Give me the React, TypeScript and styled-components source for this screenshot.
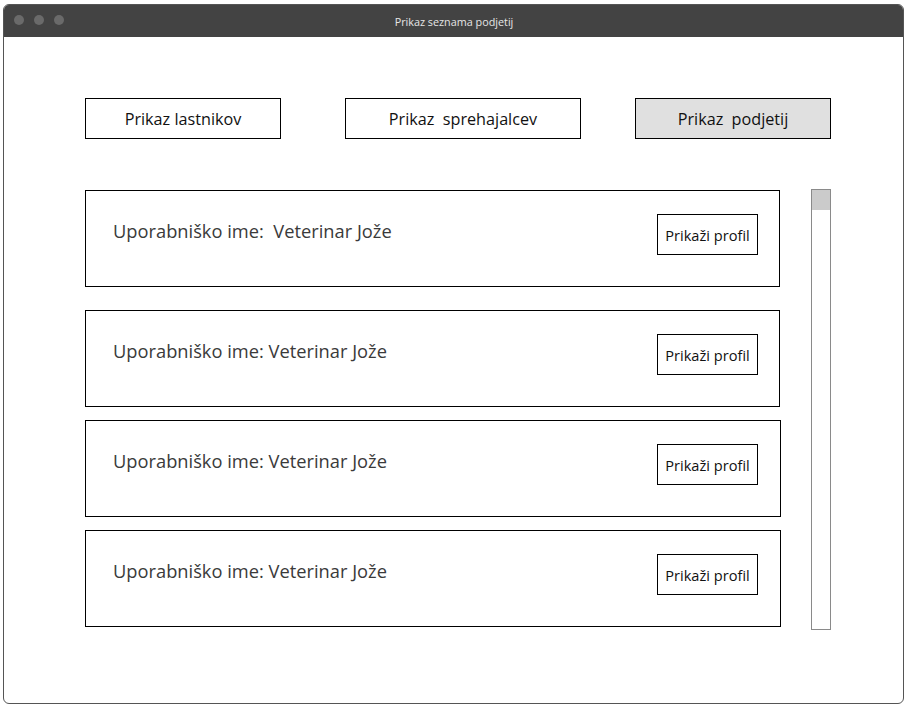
import React from "react";
import styled, { createGlobalStyle } from "styled-components";

const Global = createGlobalStyle`
  html, body { margin: 0; padding: 0; background: #fff; }
  body { font-family: "Open Sans", "Noto Sans", sans-serif; }
`;

const Page = styled.div`
  padding: 4px 6px 2px 3px;
`;

const Window = styled.div`
  width: 901px;
  height: 700px;
  box-sizing: border-box;
  border: 1px solid #555;
  border-radius: 6px;
  overflow: hidden;
  display: flex;
  flex-direction: column;
  background: #fff;
`;

const TitleBar = styled.div`
  height: 32px;
  background: #434343;
  position: relative;
  display: flex;
  align-items: center;
  justify-content: center;
  flex-shrink: 0;
`;

const Dots = styled.div`
  position: absolute;
  left: 10px;
  top: 10px;
  display: flex;
  gap: 10px;
`;

const Dot = styled.span`
  width: 10px;
  height: 10px;
  border-radius: 50%;
  background: #6a6a6a;
`;

const Title = styled.div`
  color: #e6e6e6;
  font-size: 10.8px;
  margin-left: 1px;
`;

const Content = styled.div`
  padding: 61px 0 0 81px;
  display: flex;
  flex-direction: column;
`;

const Tabs = styled.div`
  display: flex;
`;

const Tab = styled.div<{ $w: number; $ml: number; $active?: boolean }>`
  width: ${(p) => p.$w}px;
  height: 41px;
  margin-left: ${(p) => p.$ml}px;
  box-sizing: border-box;
  border: 1px solid #000;
  background: ${(p) => (p.$active ? "#e0e0e0" : "#fff")};
  display: flex;
  align-items: center;
  justify-content: center;
  font-size: 16.2px;
  color: #111;
  white-space: pre;
`;

const Body = styled.div`
  display: flex;
  margin-top: 51px;
`;

const List = styled.div`
  display: flex;
  flex-direction: column;
  width: 696px;
`;

const Card = styled.div<{ $mt: number; $w: number }>`
  width: ${(p) => p.$w}px;
  height: 97px;
  margin-top: ${(p) => p.$mt}px;
  box-sizing: border-box;
  border: 1px solid #000;
  display: flex;
  align-items: center;
  justify-content: space-between;
  padding: 0 ${(p) => (p.$w > 695 ? 22 : 21)}px 0 27px;
  align-self: flex-start;
`;

const CardText = styled.div`
  font-size: 18.3px;
  color: #3a3a3a;
  white-space: pre;
  margin-top: -16px;
`;

const ProfileButton = styled.div`
  width: 101px;
  height: 41px;
  box-sizing: border-box;
  border: 1px solid #000;
  display: flex;
  align-items: center;
  justify-content: center;
  font-size: 14.6px;
  color: #111;
  margin-top: -8px;
`;

const Scrollbar = styled.div`
  width: 20px;
  height: 441px;
  box-sizing: border-box;
  border: 1px solid #8a8a8a;
  margin-left: 30px;
  margin-top: -1px;
  display: flex;
  flex-direction: column;
`;

const Thumb = styled.div`
  height: 20px;
  background: #cbcbcb;
`;

const items = [
  { text: "Uporabniško ime:  Veterinar Jože", mt: 0, w: 695 },
  { text: "Uporabniško ime: Veterinar Jože", mt: 23, w: 695 },
  { text: "Uporabniško ime: Veterinar Jože", mt: 13, w: 696 },
  { text: "Uporabniško ime: Veterinar Jože", mt: 13, w: 696 },
];

export default function App() {
  return (
    <>
      <Global />
      <Page>
        <Window>
          <TitleBar>
            <Dots>
              <Dot />
              <Dot />
              <Dot />
            </Dots>
            <Title>Prikaz seznama podjetij</Title>
          </TitleBar>
          <Content>
            <Tabs>
              <Tab $w={196} $ml={0}>Prikaz lastnikov</Tab>
              <Tab $w={236} $ml={64}>Prikaz  sprehajalcev</Tab>
              <Tab $w={196} $ml={54} $active>Prikaz  podjetij</Tab>
            </Tabs>
            <Body>
              <List>
                {items.map((it, i) => (
                  <Card key={i} $mt={it.mt} $w={it.w}>
                    <CardText>{it.text}</CardText>
                    <ProfileButton>Prikaži profil</ProfileButton>
                  </Card>
                ))}
              </List>
              <Scrollbar>
                <Thumb />
              </Scrollbar>
            </Body>
          </Content>
        </Window>
      </Page>
    </>
  );
}
